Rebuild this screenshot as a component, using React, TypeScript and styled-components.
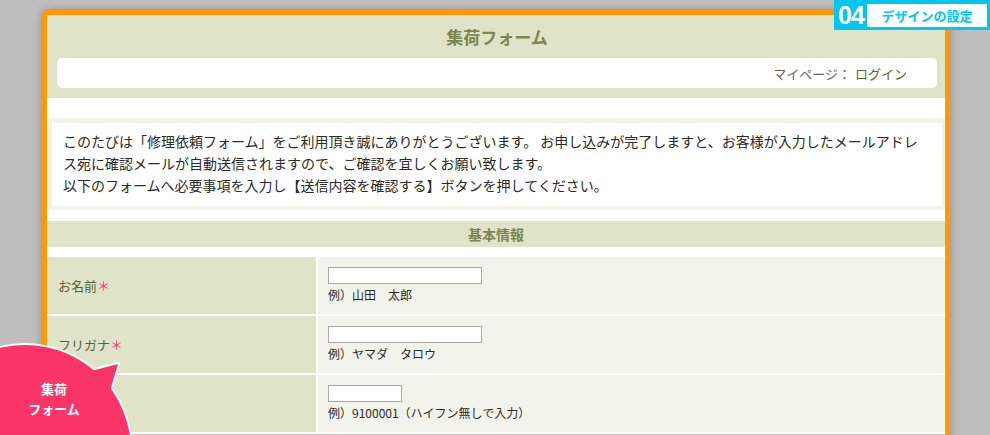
import React from "react";
import styled, { createGlobalStyle } from "styled-components";

const Colors = {
  page: "#bebebe",
  orange: "#ff9900",
  olive: "#dfe4c9",
  pale: "#f2f3ea",
  heading: "#7c8650",
  label: "#5c6133",
  text: "#2a2a2a",
  cyan: "#00c6f0",
  pink: "#fb3469",
};

const GlobalStyle = createGlobalStyle`
  body {
    margin: 0;
    background: ${Colors.page};
    font-family: "Noto Sans CJK JP", "Noto Sans", sans-serif;
    color: ${Colors.text};
    overflow: hidden;
  }
`;

const Page = styled.div`
  position: relative;
  width: 990px;
  height: 435px;
  overflow: hidden;
  padding: 10px 0 0 42px;
  box-sizing: border-box;
`;

const Frame = styled.div`
  width: 908px;
  box-sizing: border-box;
  border: 5px solid ${Colors.orange};
  border-bottom: none;
  border-radius: 6px 6px 0 0;
  background: #fff;
  box-shadow: 0 0 8px rgba(0, 0, 0, 0.28);
`;

const Header = styled.div`
  background: ${Colors.olive};
  padding: 9px 8px 10px 10px;
`;

const Title = styled.h1`
  margin: 0 0 8px;
  font-size: 17px;
  line-height: 26px;
  font-weight: 700;
  text-align: center;
  color: ${Colors.heading};
`;

const UserBar = styled.div`
  height: 30px;
  border-radius: 5px;
  background: #fff;
  display: flex;
  align-items: center;
  justify-content: flex-end;
  padding-right: 30px;
  font-size: 13px;
  color: #666;
`;

const LoginLink = styled.span`
  margin-left: 4px;
  color: ${Colors.label};
`;

const Notice = styled.div`
  margin-top: 20px;
  background: ${Colors.pale};
  padding: 5px 3px 4px 5px;
`;

const NoticeInner = styled.p`
  margin: 0;
  background: #fff;
  padding: 7px 12px 10px 11px;
  font-size: 14px;
  line-height: 22px;
  color: ${Colors.text};
`;

const SectionHead = styled.h2`
  margin: 11px 0 10px;
  height: 26px;
  line-height: 26px;
  background: ${Colors.olive};
  text-align: center;
  font-size: 14px;
  font-weight: 700;
  color: ${Colors.heading};
`;

const FormGrid = styled.div`
  display: grid;
  grid-template-columns: 269px 1fr;
  grid-auto-rows: 57px;
  gap: 2px;
  background: #fff;
`;

const LabelCell = styled.div`
  background: ${Colors.olive};
  display: flex;
  align-items: center;
  padding: 0 11px;
  font-size: 13px;
  color: ${Colors.label};
`;

const Required = styled.span`
  color: #ff3377;
`;

const FieldCell = styled.div`
  background: ${Colors.pale};
  padding: 10px 10px 0;
`;

const TextInput = styled.input<{ $w: number }>`
  display: block;
  width: ${(p) => p.$w}px;
  height: 17px;
  box-sizing: border-box;
  margin: 0;
  padding: 0 3px;
  border: 1px solid #a8a8a8;
  background: #fff;
`;

const Hint = styled.div`
  margin-top: 4px;
  font-size: 12px;
  line-height: 14px;
  color: ${Colors.text};
`;

const GridEnd = styled.div`
  margin-top: 2px;
  height: 10px;
  border-top: 1px solid #c4c5b8;
  background: ${Colors.pale};
`;

const Badge = styled.div`
  position: absolute;
  top: 0;
  right: 0;
  width: 156px;
  height: 30px;
  background: ${Colors.cyan};
  display: flex;
  align-items: center;
  padding: 0 3px 0 4px;
  box-sizing: border-box;
`;

const BadgeNum = styled.span`
  font-family: "Liberation Sans", Arial, sans-serif;
  font-weight: 700;
  font-size: 25px;
  letter-spacing: -1px;
  color: #fff;
  line-height: 30px;
`;

const BadgeLabel = styled.span`
  margin-left: auto;
  width: 120px;
  height: 23px;
  background: #fff;
  display: flex;
  align-items: center;
  justify-content: center;
  font-size: 13px;
  font-weight: 700;
  color: ${Colors.cyan};
`;

const Bubble = styled.div`
  position: absolute;
  left: 0;
  top: 335px;
  width: 160px;
  height: 100px;
`;

const BubbleText = styled.div`
  position: absolute;
  left: 0;
  top: 44px;
  width: 108px;
  text-align: center;
  font-size: 13px;
  line-height: 20px;
  font-weight: 700;
  color: #fff;
`;

// the third row's label sits under the bubble, so it is left blank
const rows = [
  { label: "お名前", width: 154, hint: "例）山田　太郎" },
  { label: "フリガナ", width: 154, hint: "例）ヤマダ　タロウ" },
  { label: "", width: 74, hint: "例）9100001（ハイフン無しで入力）" },
];

const bubbleShape = (
  <>
    <circle cx="25" cy="116" r="106" />
    <polygon points="87,37 118,29 110,56 96,62" />
  </>
);

export default function App() {
  return (
    <>
      <GlobalStyle />
      <Page>
        <Frame>
          <Header>
            <Title>集荷フォーム</Title>
            <UserBar>
              マイページ：<LoginLink>ログイン</LoginLink>
            </UserBar>
          </Header>
          <Notice>
            <NoticeInner>
              このたびは「修理依頼フォーム」をご利用頂き誠にありがとうございます。 お申し込みが完了しますと、お客様が入力したメールアドレス宛に確認メールが自動送信されますので、ご確認を宜しくお願い致します。
              <br />
              以下のフォームへ必要事項を入力し【送信内容を確認する】ボタンを押してください。
            </NoticeInner>
          </Notice>
          <SectionHead>基本情報</SectionHead>
          <FormGrid>
            {rows.map((r, i) => (
              <React.Fragment key={i}>
                <LabelCell>
                  {r.label}
                  {r.label && <Required>＊</Required>}
                </LabelCell>
                <FieldCell>
                  <TextInput type="text" $w={r.width} />
                  <Hint>{r.hint}</Hint>
                </FieldCell>
              </React.Fragment>
            ))}
          </FormGrid>
          <GridEnd />
        </Frame>

        <Badge>
          <BadgeNum>04</BadgeNum>
          <BadgeLabel>デザインの設定</BadgeLabel>
        </Badge>

        <Bubble>
          <svg width="160" height="100" viewBox="0 0 160 100">
            <g fill={Colors.pink} stroke="#fff" strokeWidth="4" strokeLinejoin="round">
              {bubbleShape}
            </g>
            <g fill={Colors.pink}>{bubbleShape}</g>
          </svg>
          <BubbleText>
            集荷
            <br />
            フォーム
          </BubbleText>
        </Bubble>
      </Page>
    </>
  );
}
